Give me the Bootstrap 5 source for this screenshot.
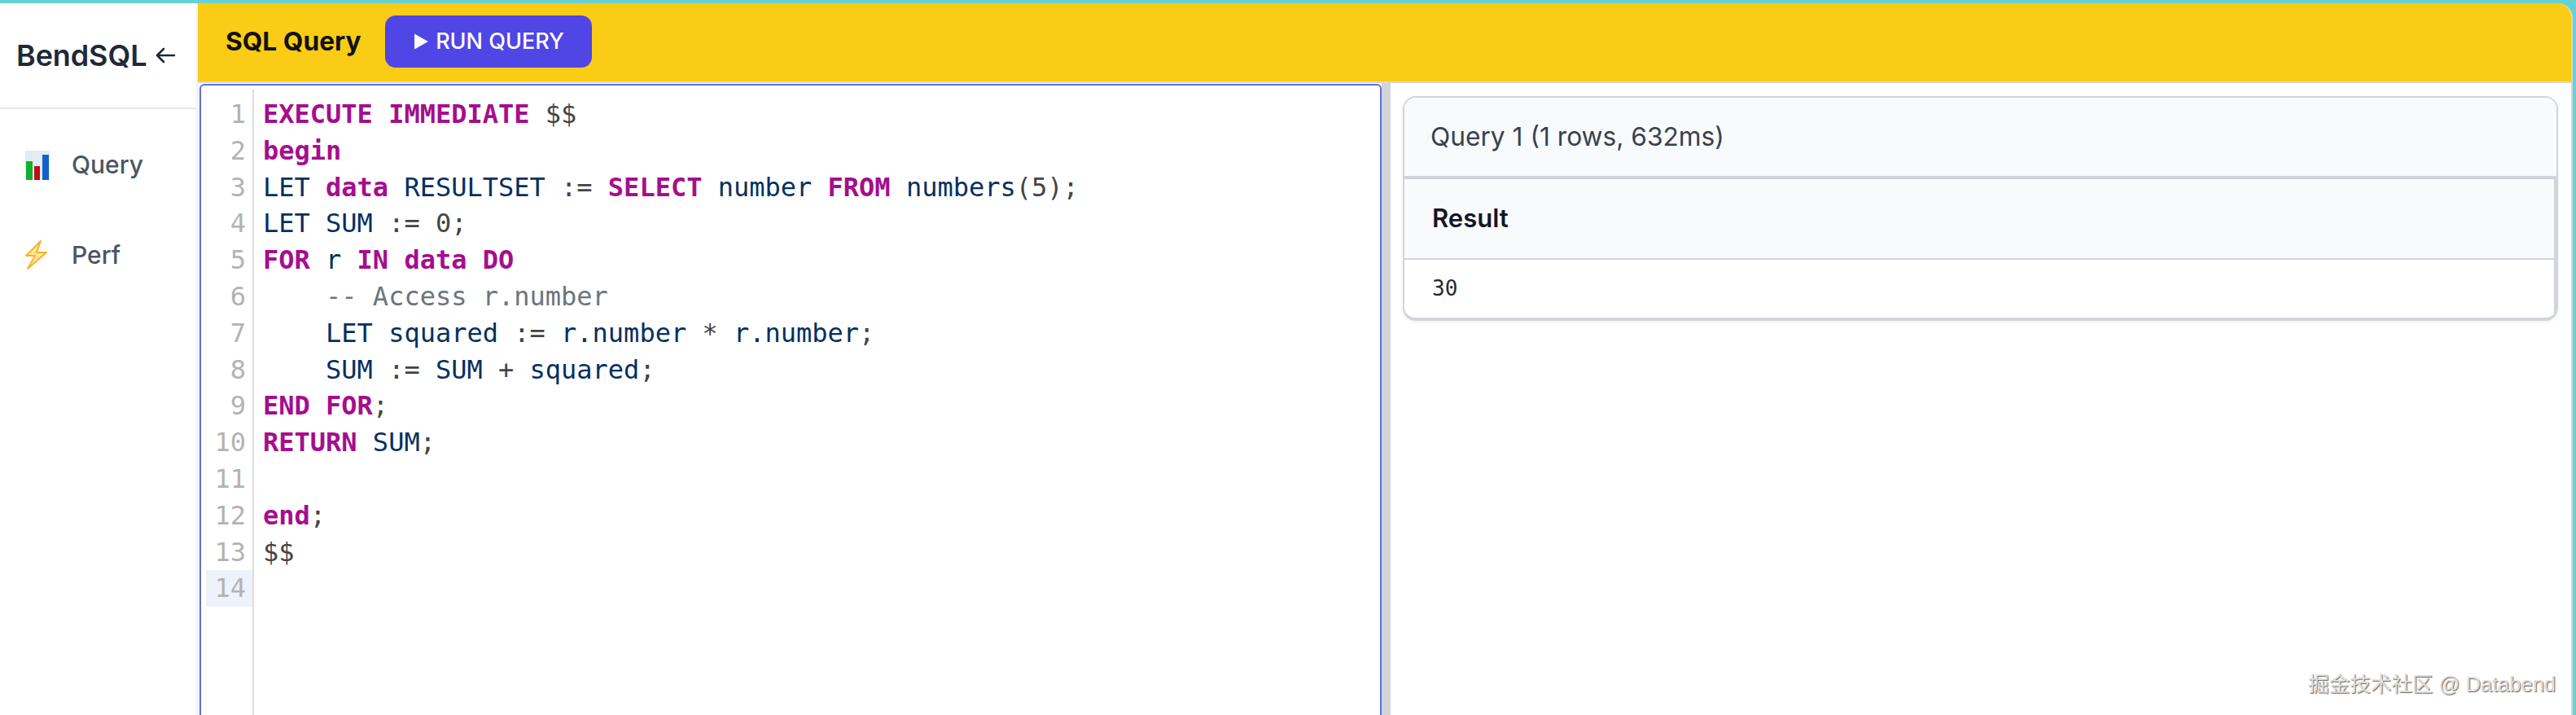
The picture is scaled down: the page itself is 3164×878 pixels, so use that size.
<!doctype html>
<html lang="en">
<head>
<meta charset="utf-8">
<title>BendSQL</title>
<link href="https://cdn.jsdelivr.net/npm/bootstrap@5.3.0/dist/css/bootstrap.min.css" rel="stylesheet">
<style>
html,body{height:100%;margin:0;overflow:hidden}
body{background:#67d2d2;font-family:Inter,"Liberation Sans",sans-serif;color:#1f2937}
.app-shell{height:878px;padding:4px 4px 0 0}
.side-rail{width:243px;flex:none;background:#fff;border-right:2px solid #f1f2f4}
.brand-box{height:130px;border-bottom:2px solid #e5e7eb;padding-left:20px;font-size:36px;font-weight:600;color:#1f2937;letter-spacing:-.1px}
.brand-box svg{width:26px;height:22px;margin-left:10px}
.rail-link{height:111px;padding-left:30px;font-size:30px;font-weight:500;color:#4b5563;text-decoration:none;gap:26px}
.rail-first{margin-top:13px}
.rail-link svg{width:32px;height:38px;flex:none}
.work-area{min-width:0;background:#fff;border-top-right-radius:18px;overflow:hidden;border-right:2px solid #d1d5db}
.top-strip{height:98px;background:#facc15;border-bottom:2px solid #d9d9d4;padding:0 0 0 34px;gap:30px;flex:none}
.strip-title{font-size:31.7px;font-weight:700;color:#111;margin:0;line-height:1;padding-bottom:2px}
.run-btn{width:254px;height:64px;background:#4f46e5;border:0;border-radius:13px;color:#fff;font-size:27px;font-weight:500;padding:0;margin-top:-2px;gap:8px}
.run-btn:hover{background:#4f46e5;color:#fff}
.run-btn svg{width:19px;height:22px}
.panes{min-height:0}
.editor-pane{width:1452px;flex:none;margin-left:2px;margin-top:1px;border:2px solid #5f6fd6;border-bottom:0;border-radius:6px 6px 0 0;padding-top:5px;font-family:"DejaVu Sans Mono","Liberation Mono",monospace;font-size:32px;line-height:44.8px;background:#fff;overflow:hidden}
.gutter-col{width:59px;flex:none;margin-left:6px;border-right:2px solid #ddd;padding-top:8px;color:#b3b3b3;text-align:right}
.gutter-num{padding-right:8px;height:44.8px}
.gutter-now{background:#edf2fb}
.code-col{padding:8px 0 0 11px;color:#444;min-width:0}
.code-row{height:44.8px;white-space:pre}
.kw{color:#a50e8d;font-weight:700}
.nm{color:#05305f}
.cm{color:#6c757d}
.split-bar{width:11px;flex:none;background:#d1d5db}
.result-pane{min-width:0;padding:16px 16px 0 15px;background:#fff}
.out-card{border:2px solid #d1d5db;border-bottom-width:4px;border-radius:16px;box-shadow:0 2px 4px rgba(0,0,0,.06);overflow:hidden;background:#fff}
.out-head{height:100px;background:#f9fafb;border-bottom:4px solid #d1d5db;padding:0 0 0 32px;font-size:31.7px;color:#374151;border-radius:0}
.out-table{margin:0;border-right:3px solid #d1d5db}
.out-table th{height:98px;background:#f9fafb;font-size:31px;font-weight:600;color:#111827;padding:0 0 0 34px;vertical-align:middle;border-bottom:2px solid #d1d5db}
.out-table td{height:72px;font-family:"DejaVu Sans Mono","Liberation Mono",monospace;font-size:26px;color:#1f2937;padding:0 0 0 34px;vertical-align:middle;border:0}
.wm-stamp{position:absolute;right:25px;bottom:23px;font-family:"Liberation Sans","Noto Sans CJK SC",sans-serif;font-size:25.5px;line-height:30px;color:#dedede;text-shadow:1px 1px 1px #666;white-space:nowrap}
</style>
</head>
<body>
<div class="app-shell d-flex position-relative">
  <aside class="side-rail d-flex flex-column">
    <div class="brand-box d-flex align-items-center">BendSQL<svg viewBox="0 0 26 22" fill="none" stroke="#1f2937" stroke-width="2.6" stroke-linecap="round" stroke-linejoin="round"><path d="M24 11H3M11 3l-8 8 8 8"/></svg></div>
    <nav class="nav flex-column">
      <a class="rail-link rail-first d-flex align-items-center" href="#">
        <svg viewBox="0 0 32 38"><rect x="1" y="1" width="30" height="36" fill="#e4ebf1"/><rect x="2" y="14" width="8" height="23" fill="#12b02c"/><rect x="12" y="20" width="7" height="17" fill="#bd0f14"/><rect x="22" y="6" width="8" height="31" fill="#0f62c9"/></svg>
        <span>Query</span></a>
      <a class="rail-link d-flex align-items-center" href="#">
        <svg viewBox="0 0 32 38"><path d="M20 1 2 19h11L4 35 27 15H15Z" fill="#ffe896" stroke="#f4b42c" stroke-width="2" stroke-linejoin="round"/></svg>
        <span>Perf</span></a>
    </nav>
  </aside>
  <main class="work-area flex-grow-1 d-flex flex-column">
    <header class="top-strip d-flex align-items-center">
      <h1 class="strip-title">SQL Query</h1>
      <button class="btn run-btn d-flex align-items-center justify-content-center" type="button"><svg viewBox="0 0 18 20"><path d="M1 1v18l16-9Z" fill="#fff"/></svg>RUN QUERY</button>
    </header>
    <div class="panes flex-grow-1 d-flex">
      <section class="editor-pane d-flex">
        <div class="gutter-col">
          <div class="gutter-num">1</div><div class="gutter-num">2</div><div class="gutter-num">3</div><div class="gutter-num">4</div><div class="gutter-num">5</div><div class="gutter-num">6</div><div class="gutter-num">7</div><div class="gutter-num">8</div><div class="gutter-num">9</div><div class="gutter-num">10</div><div class="gutter-num">11</div><div class="gutter-num">12</div><div class="gutter-num">13</div><div class="gutter-num gutter-now">14</div>
        </div>
        <div class="code-col flex-grow-1">
          <div class="code-row"><span class="kw">EXECUTE</span> <span class="kw">IMMEDIATE</span> $$</div>
          <div class="code-row"><span class="kw">begin</span></div>
          <div class="code-row"><span class="nm">LET</span> <span class="kw">data</span> <span class="nm">RESULTSET</span> := <span class="kw">SELECT</span> <span class="nm">number</span> <span class="kw">FROM</span> <span class="nm">numbers</span>(5);</div>
          <div class="code-row"><span class="nm">LET</span> <span class="nm">SUM</span> := 0;</div>
          <div class="code-row"><span class="kw">FOR</span> <span class="nm">r</span> <span class="kw">IN</span> <span class="kw">data</span> <span class="kw">DO</span></div>
          <div class="code-row cm">    -- Access r.number</div>
          <div class="code-row">    <span class="nm">LET</span> <span class="nm">squared</span> := <span class="nm">r.number</span> * <span class="nm">r.number</span>;</div>
          <div class="code-row">    <span class="nm">SUM</span> := <span class="nm">SUM</span> + <span class="nm">squared</span>;</div>
          <div class="code-row"><span class="kw">END</span> <span class="kw">FOR</span>;</div>
          <div class="code-row"><span class="kw">RETURN</span> <span class="nm">SUM</span>;</div>
          <div class="code-row"></div>
          <div class="code-row"><span class="kw">end</span>;</div>
          <div class="code-row">$$</div>
          <div class="code-row"></div>
        </div>
      </section>
      <div class="split-bar"></div>
      <section class="result-pane flex-grow-1">
        <div class="card out-card">
          <div class="card-header out-head d-flex align-items-center">Query 1 (1 rows, 632ms)</div>
          <table class="table out-table">
            <thead><tr><th scope="col">Result</th></tr></thead>
            <tbody><tr><td>30</td></tr></tbody>
          </table>
        </div>
      </section>
    </div>
  </main>
  <div class="wm-stamp">掘金技术社区 @ Databend</div>
</div>
<script src="https://cdn.jsdelivr.net/npm/bootstrap@5.3.0/dist/js/bootstrap.bundle.min.js"></script>
</body>
</html>
